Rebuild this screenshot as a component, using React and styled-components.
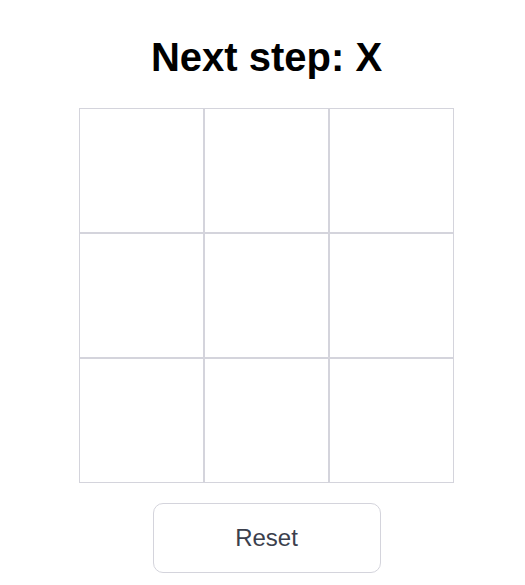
import React, { useState } from 'react'
import styled, { createGlobalStyle } from 'styled-components'

const GlobalStyle = createGlobalStyle`
  body {
    margin: 0;
    background: #fff;
    font-family: "Liberation Sans", Arial, sans-serif;
  }
`

const Wrapper = styled.div`
  padding: 34px 0 0 8px;
  display: flex;
  flex-direction: column;
  align-items: center;
`

const Title = styled.h1`
  margin: 0;
  font-size: 40px;
  font-weight: 700;
  line-height: 46px;
  color: #000;
`

const Board = styled.div`
  margin-top: 28px;
  display: grid;
  grid-template-columns: repeat(3, 125px);
  grid-template-rows: repeat(3, 125px);
`

const Cell = styled.button`
  box-sizing: border-box;
  width: 125px;
  height: 125px;
  padding: 0;
  border: 1px solid #d4d4dc;
  background: #fff;
  font-family: inherit;
  font-size: 64px;
  font-weight: 700;
  color: #222;
  cursor: pointer;
`

const ResetButton = styled.button`
  box-sizing: border-box;
  margin-top: 20px;
  width: 228px;
  height: 70px;
  border: 1px solid #d4d4dc;
  border-radius: 10px;
  background: #fff;
  font-family: inherit;
  font-size: 24px;
  color: #3b404d;
  cursor: pointer;
`

const App = () => {
  const [cells, setCells] = useState(Array(9).fill(null))
  const [xNext, setXNext] = useState(true)

  const play = (i) => {
    if (cells[i]) return
    const next = cells.slice()
    next[i] = xNext ? 'X' : 'O'
    setCells(next)
    setXNext(!xNext)
  }

  return (
    <Wrapper>
      <GlobalStyle />
      <Title>Next step: {xNext ? 'X' : 'O'}</Title>
      <Board>
        {cells.map((c, i) => (
          <Cell key={i} onClick={() => play(i)}>{c}</Cell>
        ))}
      </Board>
      <ResetButton onClick={() => { setCells(Array(9).fill(null)); setXNext(true) }}>
        Reset
      </ResetButton>
    </Wrapper>
  )
}

export default App
